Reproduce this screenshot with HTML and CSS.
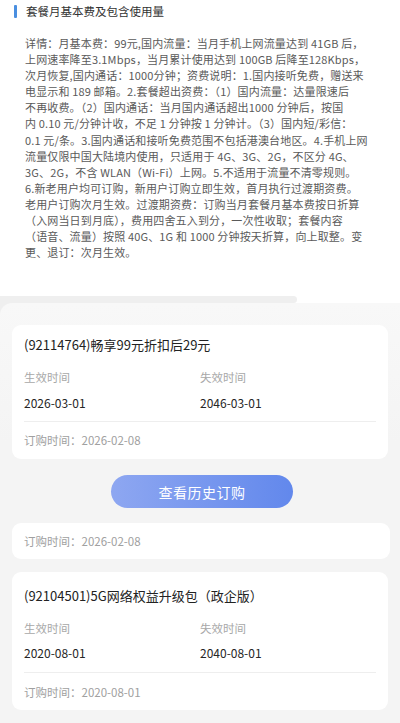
FILE: index.html
```html
<!DOCTYPE html>
<html lang="zh-CN">
<head>
<meta charset="utf-8">
<title>套餐详情</title>
<link rel="stylesheet" href="styles.css">
</head>
<body>
<div class="page">
  <section class="intro">
    <div class="intro-title"><span class="bar"></span><span>套餐月基本费及包含使用量</span></div>
    <div class="intro-body">
      <div class="ln">详情：月基本费：99元,国内流量：当月手机上网流量达到 41GB 后，</div>
      <div class="ln">上网速率降至3.1Mbps，当月累计使用达到 100GB 后降至128Kbps，</div>
      <div class="ln">次月恢复,国内通话：1000分钟；资费说明：1.国内接听免费，赠送来</div>
      <div class="ln">电显示和 189 邮箱。2.套餐超出资费：（1）国内流量：达量限速后</div>
      <div class="ln">不再收费。（2）国内通话：当月国内通话超出1000 分钟后，按国</div>
      <div class="ln">内 0.10 元/分钟计收，不足 1 分钟按 1 分钟计。（3）国内短/彩信：</div>
      <div class="ln">0.1 元/条。3.国内通话和接听免费范围不包括港澳台地区。4.手机上网</div>
      <div class="ln">流量仅限中国大陆境内使用，只适用于 4G、3G、2G，不区分 4G、</div>
      <div class="ln">3G、2G，不含 WLAN（Wi-Fi）上网。5.不适用于流量不清零规则。</div>
      <div class="ln">6.新老用户均可订购，新用户订购立即生效，首月执行过渡期资费。</div>
      <div class="ln">老用户订购次月生效。过渡期资费：订购当月套餐月基本费按日折算</div>
      <div class="ln">（入网当日到月底），费用四舍五入到分，一次性收取；套餐内容</div>
      <div class="ln">（语音、流量）按照 40G、1G 和 1000 分钟按天折算，向上取整。变</div>
      <div class="ln">更、退订：次月生效。</div>
    </div>
  </section>
  <div class="band"><span class="band-grey"></span></div>
  <div class="panel-wrap">
    <section class="panel">
      <div class="card card-first">
        <div class="card-title">(92114764)畅享99元折扣后29元</div>
        <div class="grid">
          <div class="label">生效时间</div>
          <div class="label">失效时间</div>
          <div class="date">2026-03-01</div>
          <div class="date">2046-03-01</div>
        </div>
        <div class="divider"></div>
        <div class="ordered">订购时间：2026-02-08</div>
      </div>
      <div class="btn-row"><button class="history-btn">查看历史订购</button></div>
      <div class="card card-piece">
        <div class="ordered">订购时间：2026-02-08</div>
      </div>
      <div class="card card-last">
        <div class="card-title">(92104501)5G网络权益升级包（政企版）</div>
        <div class="grid">
          <div class="label">生效时间</div>
          <div class="label">失效时间</div>
          <div class="date">2020-08-01</div>
          <div class="date">2040-08-01</div>
        </div>
        <div class="divider"></div>
        <div class="ordered">订购时间：2020-08-01</div>
      </div>
    </section>
  </div>
</div>
</body>
</html>
```
FILE: styles.css
```css
* { box-sizing: border-box; }
html, body { margin: 0; padding: 0; }
body {
  background: #f3f3f3;
  font-family: "Noto Sans CJK SC", "Noto Sans", sans-serif;
  width: 400px;
  height: 723px;
  overflow: hidden;
}
.page { display: flex; flex-direction: column; }

.intro {
  background: #ffffff;
  padding: 3px 0 36px 0;
}
.intro-title {
  display: flex;
  align-items: center;
  gap: 9px;
  padding-left: 14px;
  font-size: 11.5px;
  line-height: 16px;
  color: #333333;
}
.bar {
  display: block;
  width: 3px;
  height: 13px;
  background: #4a8fe0;
  border-radius: 1px;
}
.intro-body {
  margin-top: 16px;
  padding: 0 25px;
  font-size: 11px;
  line-height: 16.1px;
  letter-spacing: 0.15px;
  color: #5a5a5a;
}
.ln { white-space: nowrap; }

.band {
  height: 7px;
  background: #ffffff;
  display: flex;
}
.band-grey {
  width: 297px;
  height: 7px;
  background: #efefef;
  border-radius: 0 4px 4px 0;
}

.panel-wrap { background: #efefef; }
.panel {
  background: linear-gradient(#f8f8f8, #f4f4f4 140px);
  border-top-left-radius: 12px;
  padding: 22px 0 20px;
  display: flex;
  flex-direction: column;
}

.card {
  background: #ffffff;
  margin: 0 12px;
  border-radius: 9px;
  padding: 10px 12px 10px;
}
.card-piece {
  margin-top: 15px;
  padding: 9px 12px;
  margin-right: 10px;
}
.card-last {
  margin-top: 13px;
  padding: 14px 12px 9px;
}
.card-title {
  font-size: 13px;
  line-height: 20px;
  color: #222222;
}
.grid {
  display: grid;
  grid-template-columns: 176px 1fr;
  row-gap: 8px;
  margin-top: 13px;
}
.card-last .grid { row-gap: 7px; }
.label {
  font-size: 11.5px;
  line-height: 18px;
  color: #a8a8a8;
}
.date {
  font-size: 12px;
  line-height: 18px;
  color: #262626;
}
.divider {
  height: 1px;
  background: #eeeeee;
  margin: 9px 0 9px;
}
.card-last .divider { margin: 10px 0 10px; }
.ordered {
  font-size: 11.5px;
  line-height: 18px;
  color: #a0a0a0;
}

.btn-row {
  display: flex;
  justify-content: center;
  padding-left: 4px;
  margin-top: 16px;
}
.history-btn {
  width: 182px;
  height: 33px;
  border: none;
  border-radius: 17px;
  background: linear-gradient(90deg, #8ea7f1, #6288ec);
  color: #ffffff;
  font-family: inherit;
  font-size: 14px;
  letter-spacing: 0.5px;
  padding: 0;
}
```
